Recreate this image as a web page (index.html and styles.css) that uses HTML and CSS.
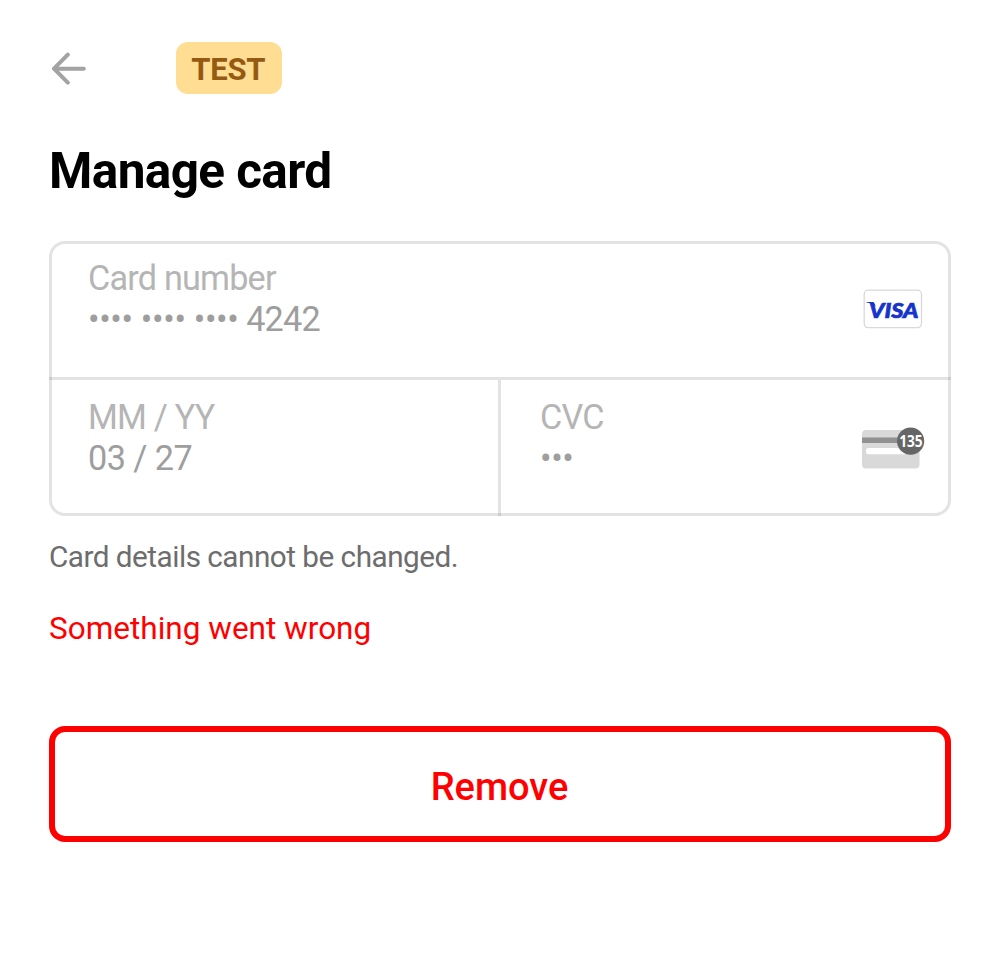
FILE: index.html
```html
<!DOCTYPE html>
<html lang="en">
<head>
<meta charset="utf-8">
<title>Manage card</title>
<link rel="stylesheet" href="styles.css">
</head>
<body>
<main class="sheet">
  <header class="topbar">
    <svg class="back" viewBox="0 0 36 34" aria-label="Back"><path d="M17.800 3.700 4 17.700l13.800 14M4 17.700h29.800" fill="none" stroke="#a3a3a3" stroke-width="4" stroke-linecap="round" stroke-linejoin="round"/></svg>
    <span class="badge">TEST</span>
  </header>
  <h1 class="title">Manage card</h1>
  <section class="card-form">
    <div class="field field-number">
      <div class="field-text">
        <span class="label">Card number</span>
        <span class="value"><span class="mask">•••• •••• ••••</span> 4242</span>
      </div>
      <svg class="visa" viewBox="0 0 60 40"><rect x="1.200" y="1.200" width="57.300" height="37.400" rx="4" fill="#fff" stroke="#d9d9d9" stroke-width="1.300"/><text class="visa-text" x="6" y="28.500" textLength="49.500" lengthAdjust="spacingAndGlyphs">VISA</text><path d="M3.500 13h7l2.500 4.500C10.500 15 7 14 3.500 13.500z" fill="#1434cb"/></svg>
    </div>
    <div class="field-row">
      <div class="field field-expiry">
        <div class="field-text">
          <span class="label">MM / YY</span>
          <span class="value expiry">03 / 27</span>
        </div>
      </div>
      <div class="field field-cvc">
        <div class="field-text">
          <span class="label">CVC</span>
          <span class="value mask">•••</span>
        </div>
        <svg class="cvc" viewBox="0 0 64 44"><rect x="1" y="4" width="57.500" height="38.500" rx="4" fill="#d9d9d9"/><path d="M1 11.500h50v5.500H1z" fill="#919191"/><rect x="5" y="22" width="41" height="6.300" rx="2.500" fill="#fff"/><circle cx="49.600" cy="15.200" r="13.600" fill="#666"/><text class="cvc-text" x="38.200" y="20.600" textLength="23.500" lengthAdjust="spacingAndGlyphs">135</text></svg>
      </div>
    </div>
  </section>
  <p class="note">Card details cannot be changed.</p>
  <p class="error">Something went wrong</p>
  <button class="remove" type="button">Remove</button>
</main>
</body>
</html>
```
FILE: styles.css
```css
* { box-sizing: border-box; }
body { margin: 0; background: #fff; font-family: Roboto, "Liberation Sans", sans-serif; }
.sheet { display: flex; flex-direction: column; padding: 41.500px 49px; }
.topbar { display: flex; align-items: center; height: 53px; }
.back { width: 36px; height: 34px; margin-left: 1px; }
.badge { display: flex; align-items: center; justify-content: center; width: 105.500px; height: 52.500px; margin-left: 90px; padding: 3px 1px 0 0; border-radius: 12px; background: #ffdd93; color: #945a12; font-size: 31px; font-weight: 700; letter-spacing: -0.200px; }
.title { margin: 47.500px 0 0; font-size: 49.500px; line-height: 58px; font-weight: 700; letter-spacing: -0.600px; color: #000; }
.card-form { margin-top: 41px; height: 275px; border: 3px solid rgba(60, 60, 67, 0.145); border-radius: 16px; display: flex; flex-direction: column; }
.field { display: flex; align-items: flex-start; justify-content: space-between; flex: 1; padding: 17px 25px 0 36px; color: #9e9e9e; }
.field-number { position: relative; flex: none; height: 136px; padding-top: 14px; }
/* the dividers run over the translucent outer border */
.field-number::after { content: ""; position: absolute; left: -3px; right: -3px; bottom: 0; height: 3px; background: rgba(60, 60, 67, 0.145); }
.field-row { display: flex; flex: 1; }
.field-expiry { flex: none; width: 446px; }
.field-cvc { position: relative; padding-left: 42px; padding-right: 23px; }
.field-cvc::before { content: ""; position: absolute; left: 0; top: 0; bottom: -3px; width: 3px; background: rgba(60, 60, 67, 0.145); }
.field-text { display: flex; flex-direction: column; }
.label, .value { font-size: 34.200px; line-height: 41px; height: 41px; letter-spacing: -0.800px; }
.label { color: #b5b5b5; }
.value.expiry { letter-spacing: -0.550px; }
.mask, .value.mask { letter-spacing: -0.350px; }
.visa { width: 60px; height: 40px; margin-top: 31px; }
.visa-text { font: italic 900 21.500px Lato, sans-serif; fill: #1434cb; stroke: #1434cb; stroke-width: 0.700px; }
.cvc { width: 64px; height: 44px; margin-top: 29px; }
.cvc-text { font: 700 15.500px "Noto Sans", sans-serif; fill: #fff; }
.note { margin: 22.500px 0 0; font-size: 29.700px; line-height: 35px; letter-spacing: -0.500px; color: #6d6d6d; }
.error { margin: 36px 0 0; font-size: 31.500px; line-height: 37px; color: #f00; }
.remove { margin-top: 79.500px; height: 116px; border: 6px solid #f00; border-radius: 16px; padding: 6px 1px 0 0; background: #fff; color: #f00; font: 500 38px Roboto, sans-serif; }
```
